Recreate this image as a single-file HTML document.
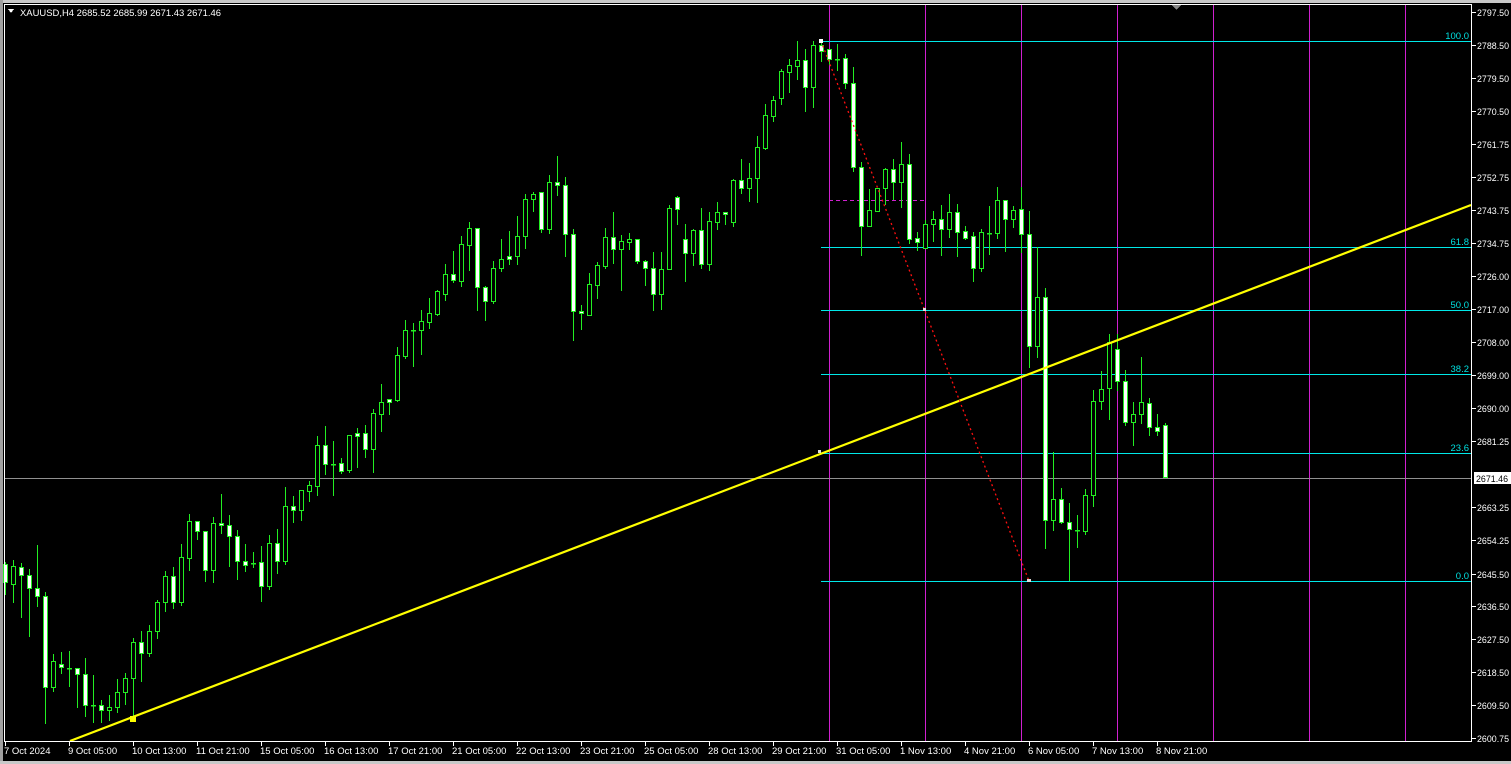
<!DOCTYPE html>
<html><head><meta charset="utf-8"><style>
html,body{margin:0;padding:0;background:#000;width:1511px;height:764px;overflow:hidden;font-family:"Liberation Sans",sans-serif}
</style></head><body>
<svg id="s" width="1511" height="764" xmlns="http://www.w3.org/2000/svg" style="position:absolute;left:0;top:0" shape-rendering="crispEdges">
<rect x="0" y="0" width="1511" height="764" fill="#000"/>
<rect x="0" y="0" width="1511" height="3" fill="#c8c8c8"/>
<rect x="0" y="0" width="3" height="764" fill="#a0a0a0"/>
<rect x="0" y="761" width="1511" height="3" fill="#c8c8c8"/>
<g id="grid"></g>
<g id="candles"></g>
<g id="over"></g>
<g id="axis"></g>
</svg>
<script>
var NS="http://www.w3.org/2000/svg";
function el(p,t,a,txt){var e=document.createElementNS(NS,t);for(var k in a)e.setAttribute(k,a[k]);if(txt!=null)e.textContent=txt;p.appendChild(e);return e;}
var G=document.getElementById('grid'),C=document.getElementById('candles'),O=document.getElementById('over'),A=document.getElementById('axis');
el(A,'line',{x1:4.5,y1:4,x2:4.5,y2:742,stroke:'#fff'});
el(A,'line',{x1:4,y1:4.5,x2:1472,y2:4.5,stroke:'#fff'});
el(A,'line',{x1:1471.5,y1:4,x2:1471.5,y2:742,stroke:'#fff'});
el(A,'line',{x1:4,y1:741.5,x2:1472,y2:741.5,stroke:'#fff'});
[829,925,1021,1117,1213,1309,1405].forEach(function(x){el(G,'line',{x1:x+.5,y1:5,x2:x+.5,y2:741,stroke:'#d020d0'});});
el(G,'line',{x1:829,y1:200.5,x2:924,y2:200.5,stroke:'#d020d0','stroke-dasharray':'4,3'});
var fib=[[41,'100.0'],[247,'61.8'],[310,'50.0'],[374,'38.2'],[453,'23.6'],[581,'0.0']];
fib.forEach(function(f){el(G,'line',{x1:821,y1:f[0]+.5,x2:1471,y2:f[0]+.5,stroke:'#00e8e8'});
 el(A,'text',{x:1469,y:f[0]-2,'text-anchor':'end','font-size':'9.5',fill:'#00e0e0','font-family':'Liberation Sans'},f[1]);});
el(G,'line',{x1:5,y1:478.5,x2:1471,y2:478.5,stroke:'#909090'});
var D=[[564,582,562,594],[584,566,560,602],[567,575,563,617],[575,588,569,636],[588,596,545,606],[596,687,592,723],[687,661,654,691],[664,667,652,673],[668,668,651,686],[668,674,668,707],[674,705,658,716],[705,705,675,722],[705,710,700,722],[710,707,695,720],[707,692,679,712],[692,678,673,704],[678,642,638,720],[642,653,631,681],[653,631,625,656],[631,602,600,638],[602,576,571,611],[576,602,567,608],[602,557,544,605],[558,521,514,570],[521,531,521,539],[531,570,531,581],[570,523,517,582],[523,525,494,533],[525,536,515,566],[536,561,530,579],[561,565,544,571],[563,563,552,567],[562,586,546,601],[586,543,535,589],[543,561,529,573],[561,506,487,564],[506,510,496,522],[510,490,490,520],[491,485,481,501],[486,445,436,495],[445,464,426,474],[464,464,441,495],[463,471,458,473],[470,435,435,472],[433,436,428,467],[433,449,425,457],[449,413,409,472],[414,402,384,431],[399,402,399,414],[400,355,347,401],[356,330,320,358],[330,330,323,366],[330,321,310,354],[322,313,298,328],[314,291,290,315],[294,274,264,300],[274,280,251,282],[281,244,236,286],[245,228,222,270],[228,287,228,310],[287,301,286,320],[301,268,261,303],[268,259,239,271],[256,259,231,264],[256,236,216,264],[236,199,194,248],[199,194,192,211],[192,229,192,232],[229,182,175,233],[182,185,156,195],[185,234,177,256],[234,311,229,340],[311,313,305,329],[315,284,273,315],[285,265,262,298],[266,237,228,268],[237,249,212,263],[249,241,235,290],[242,239,233,249],[239,261,239,263],[261,268,260,285],[268,294,252,310],[294,269,252,309],[269,208,205,269],[197,209,196,224],[239,253,224,281],[253,230,229,265],[230,264,208,268],[264,221,212,270],[222,212,202,229],[212,214,212,224],[222,180,179,226],[180,188,159,193],[188,178,163,201],[178,147,136,202],[148,115,104,149],[116,100,96,121],[98,71,69,104],[72,65,59,92],[66,60,41,79],[60,87,49,111],[87,45,41,107],[45,51,39,61],[49,59,49,64],[59,59,44,70],[58,83,54,88],[83,167,67,171],[167,226,162,255],[226,210,189,226],[211,188,188,211],[188,169,168,204],[169,182,159,199],[182,164,142,207],[164,239,154,243],[238,242,232,250],[248,224,220,248],[224,219,211,241],[219,229,205,255],[229,212,194,237],[212,232,204,256],[231,238,226,239],[236,268,232,281],[268,232,229,271],[233,233,206,254],[233,200,187,238],[200,219,200,251],[219,210,206,227],[209,234,187,252],[234,346,211,367],[346,297,247,357],[297,520,288,548],[520,499,452,530],[499,522,488,523],[522,529,503,580],[530,530,515,547],[531,495,489,534],[495,401,390,506],[401,389,371,409],[388,342,334,419],[349,381,334,390],[381,422,370,425],[422,414,402,445],[414,402,357,423],[403,427,398,435],[427,431,414,435],[425,477,423,477]];
var GR='#22ee22';
D.forEach(function(d,i){var x=5+8*i;var o=d[0],c=d[1],h=d[2],l=d[3];
 el(C,'line',{x1:x+.5,y1:h,x2:x+.5,y2:l+1,stroke:GR});
 var t=Math.min(o,c),b=Math.max(o,c);
 if(b-t<1){el(C,'rect',{x:x-2,y:t,width:5,height:1.5,fill:GR});}
 else{el(C,'rect',{x:x-1.5,y:t+.5,width:4,height:b-t,fill:(c>o?'#fff':'#000'),stroke:GR,'stroke-width':1});}
});
el(O,'line',{x1:70,y1:741,x2:1471,y2:205,stroke:'#ffff00','stroke-width':2.2,'shape-rendering':'auto'});
el(O,'rect',{x:130,y:716,width:6,height:6,fill:'#ffff00'});
el(O,'line',{x1:821,y1:41,x2:1029,y2:581,stroke:'#ff1010','stroke-width':1.3,'stroke-dasharray':'2,3','shape-rendering':'auto'});
el(O,'rect',{x:819,y:39,width:4,height:4,fill:'#fff'});
el(O,'rect',{x:1027,y:579,width:4,height:3,fill:'#ddd'});
el(O,'rect',{x:923,y:308,width:3,height:3,fill:'#ddd'});
el(O,'rect',{x:818,y:450,width:3,height:3,fill:'#ddd'});
el(O,'path',{d:'M1172 5 L1181 5 L1176.5 10 Z',fill:'#888'});
var P=[['2797.50',12],['2788.50',45],['2779.50',78],['2770.50',111],['2761.75',144],['2752.75',177],['2743.75',210],['2734.75',243],['2726.00',276],['2717.00',309],['2708.00',342],['2699.00',375],['2690.00',408],['2681.25',441],['2663.25',507],['2654.25',540],['2645.50',574],['2636.50',606],['2627.50',639],['2618.50',672],['2609.50',705],['2600.75',738]];
P.forEach(function(p){el(A,'line',{x1:1472,y1:p[1]+.5,x2:1476,y2:p[1]+.5,stroke:'#fff'});
 el(A,'text',{x:1477,y:p[1]+4,'font-size':'9.5',fill:'#fff',textLength:'32',lengthAdjust:'spacingAndGlyphs'},p[0]);});
el(A,'rect',{x:1474,y:472,width:37,height:12,fill:'#fff'});
el(A,'text',{x:1476,y:482,'font-size':'9.5',fill:'#000',textLength:'32',lengthAdjust:'spacingAndGlyphs'},'2671.46');
var T=['7 Oct 2024','9 Oct 05:00','10 Oct 13:00','11 Oct 21:00','15 Oct 05:00','16 Oct 13:00','17 Oct 21:00','21 Oct 05:00','22 Oct 13:00','23 Oct 21:00','25 Oct 05:00','28 Oct 13:00','29 Oct 21:00','31 Oct 05:00','1 Nov 13:00','4 Nov 21:00','6 Nov 05:00','7 Nov 13:00','8 Nov 21:00'];
T.forEach(function(t,i){var x=5+64*i;el(A,'line',{x1:x+.5,y1:742,x2:x+.5,y2:746,stroke:'#fff'});
 el(A,'text',{x:x-1,y:754,'font-size':'9.5',fill:'#fff'},t);});
el(A,'path',{d:'M8 9 L14 9 L11 13 Z',fill:'#fff'});
el(A,'text',{x:20,y:16,'font-size':'9.5',fill:'#fff','xml:space':'preserve',textLength:'201',lengthAdjust:'spacingAndGlyphs'},'XAUUSD,H4  2685.52 2685.99 2671.43 2671.46');
</script>
</body></html>
